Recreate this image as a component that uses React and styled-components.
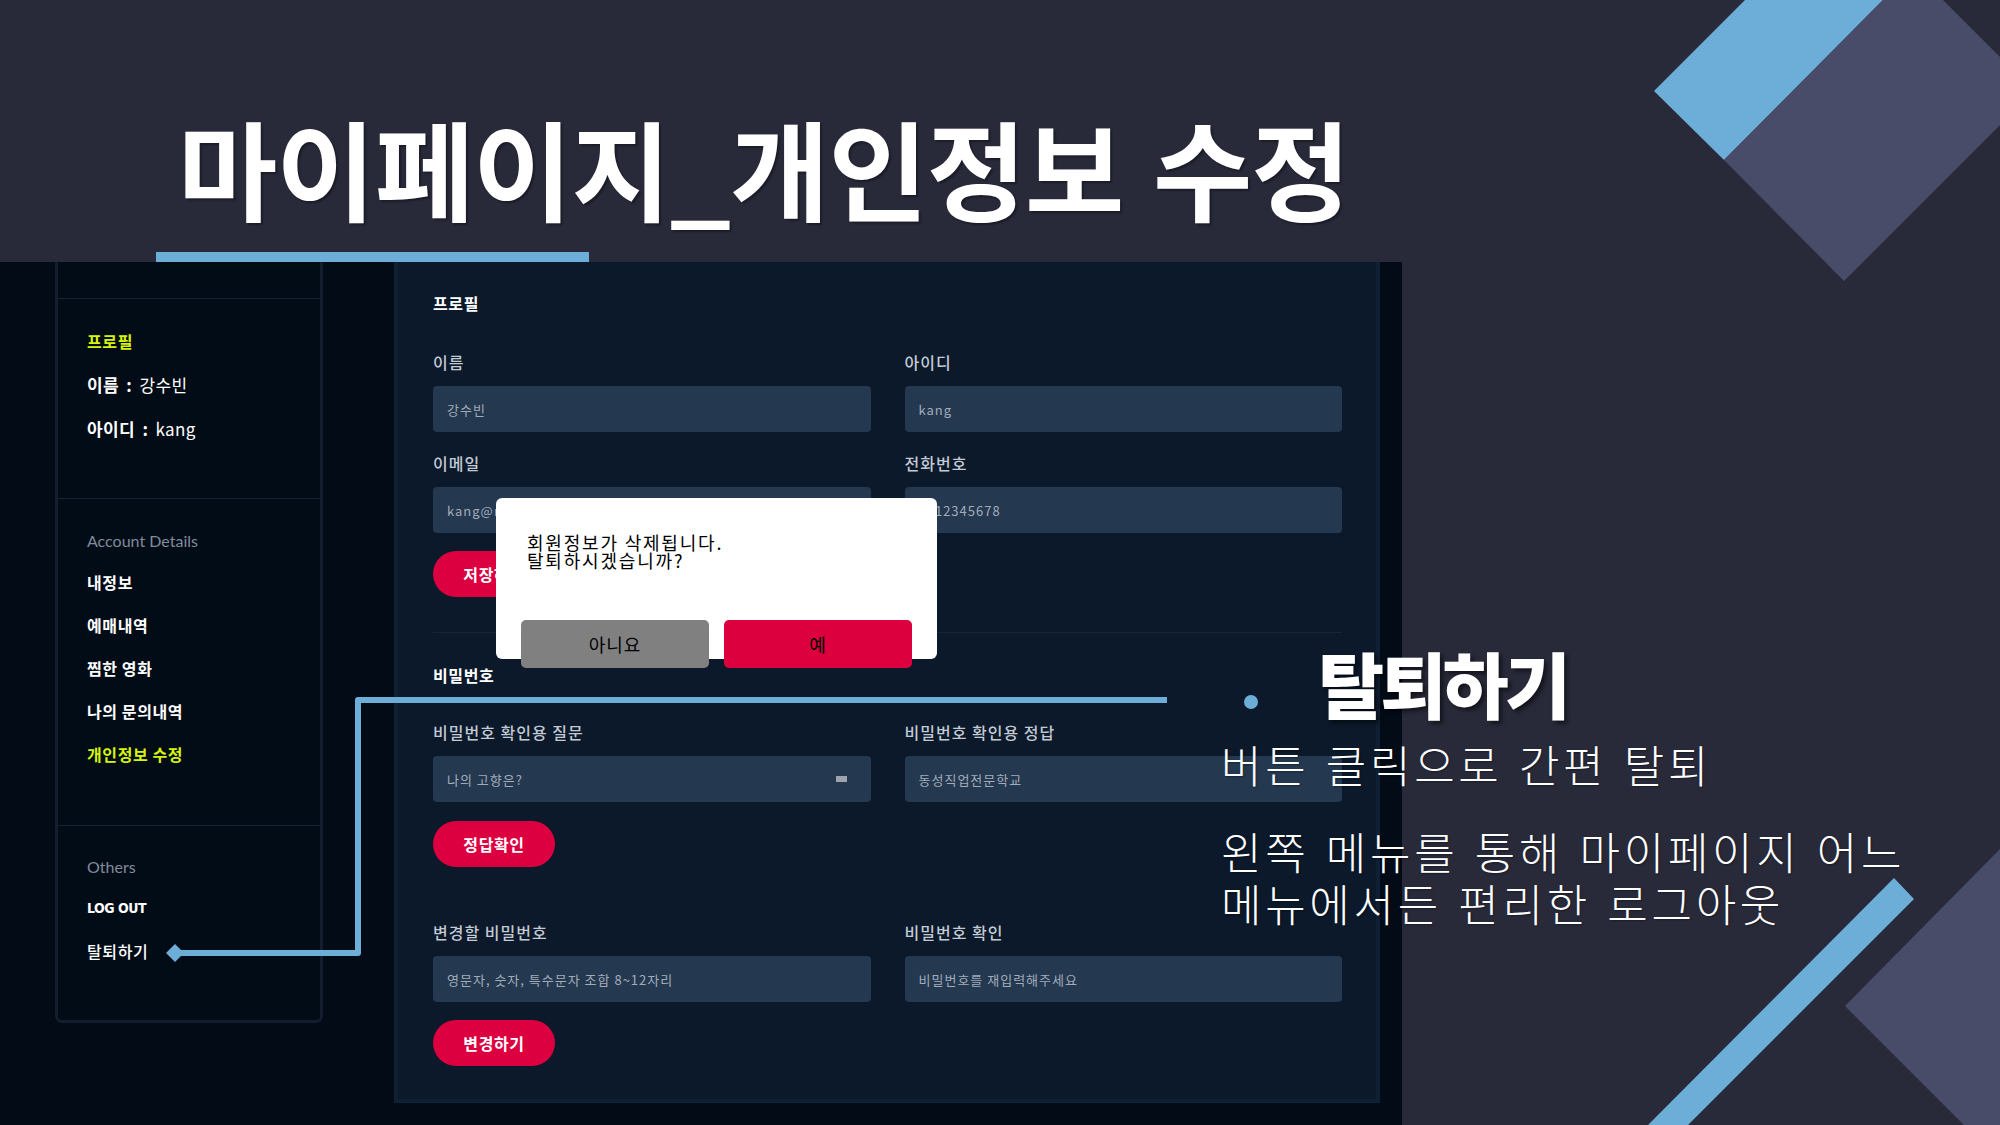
import React from 'react';
import styled, { createGlobalStyle } from 'styled-components';

const KR = `"Noto Sans CJK KR", "Noto Sans", sans-serif`;

const GlobalStyle = createGlobalStyle`
  html, body {
    margin: 0;
    padding: 0;
    background: #282a3a;
  }
  body {
    font-family: ${KR};
  }
  * {
    box-sizing: border-box;
  }
`;

const App = () => {
    return (
        <>
            <GlobalStyle />
            <Slide>
                <Decor viewBox="0 0 2000 1125">
                    <polygon points="1745,0 1883,0 1724,160 1654,91" fill="#6daed9" />
                    <polygon points="1883,0 1943,0 2000,57 2000,125 1844,281 1724,160" fill="#484c69" />
                    <polygon points="2000,849 1845,1006 1964,1125 2000,1125" fill="#484c69" />
                    <polygon points="1894,878 1914,899 1688,1125 1648,1125" fill="#6daed9" />
                </Decor>

                <Header>
                    <Title>마이페이지_개인정보 수정</Title>
                    <TitleBar />
                </Header>

                <Body>
                    <Screen>
                        <Sidebar>
                            <SideSection $h={36} $first />
                            <SideSection $h={200} $pt={20}>
                                <SideLink $accent $lh={44}>프로필</SideLink>
                                <SideInfo><b>이름 :</b> 강수빈</SideInfo>
                                <SideInfo><b>아이디 :</b> kang</SideInfo>
                            </SideSection>
                            <SideSection $h={327} $pt={22}>
                                <SideHeading>Account Details</SideHeading>
                                <SideLink>내정보</SideLink>
                                <SideLink>예매내역</SideLink>
                                <SideLink>찜한 영화</SideLink>
                                <SideLink>나의 문의내역</SideLink>
                                <SideLink $accent>개인정보 수정</SideLink>
                            </SideSection>
                            <SideSection $h={195} $pt={21}>
                                <SideHeading>Others</SideHeading>
                                <SideLink $latin>LOG OUT</SideLink>
                                <SideLink $plain>탈퇴하기</SideLink>
                            </SideSection>
                        </Sidebar>

                        <Panel>
                            <PanelTitle>프로필</PanelTitle>
                            <FieldGrid $mt={35}>
                                <Field label="이름" value="강수빈" />
                                <Field label="아이디" value="kang" />
                                <Field label="이메일" value="kang@naver.com" />
                                <Field label="전화번호" value="0112345678" />
                            </FieldGrid>
                            <PillButton $mt={18}>저장하기</PillButton>
                            <Divider />

                            <PanelTitle $mt={30}>비밀번호</PanelTitle>
                            <FieldGrid $mt={33}>
                                <Field label="비밀번호 확인용 질문" value="나의 고향은?" select />
                                <Field label="비밀번호 확인용 정답" value="동성직업전문학교" />
                            </FieldGrid>
                            <PillButton $mt={19}>정답확인</PillButton>
                            <FieldGrid $mt={53}>
                                <Field label="변경할 비밀번호" value="영문자, 숫자, 특수문자 조합 8~12자리" />
                                <Field label="비밀번호 확인" value="비밀번호를 재입력해주세요" />
                            </FieldGrid>
                            <PillButton $mt={18}>변경하기</PillButton>
                        </Panel>

                        <Modal>
                            <ModalText>
                                회원정보가 삭제됩니다.<br />
                                탈퇴하시겠습니까?
                            </ModalText>
                            <ModalActions>
                                <ModalButton>아니요</ModalButton>
                                <ModalButton $primary>예</ModalButton>
                            </ModalActions>
                        </Modal>
                    </Screen>
                </Body>

                <Connector viewBox="0 0 2000 1125">
                    <path d="M 180 953 H 358 V 700 H 1167" fill="none" stroke="#6caed8" strokeWidth="6" strokeLinejoin="round" />
                    <polygon points="166,953 175,944 184,953 175,962" fill="#6caed8" />
                </Connector>

                <Callout>
                    <CalloutHead>
                        <Dot />
                        <CalloutTitle>탈퇴하기</CalloutTitle>
                    </CalloutHead>
                    <CalloutText $mt={20}>버튼 클릭으로 간편 탈퇴</CalloutText>
                    <CalloutText $mt={35}>
                        왼쪽 메뉴를 통해 마이페이지 어느<br />
                        메뉴에서든 편리한 로그아웃
                    </CalloutText>
                </Callout>
            </Slide>
        </>
    );
}

const Field = ({ label, value, select }) => (
    <div>
        <FieldLabel>{label}</FieldLabel>
        <InputBox>
            <span>{value}</span>
            {select && <SelectMark />}
        </InputBox>
    </div>
);

const Slide = styled.div`
    position: relative;
    width: 2000px;
    height: 1125px;
    overflow: hidden;
    background: #282a3a;
    display: flex;
    flex-direction: column;
`;

const Decor = styled.svg`
    position: absolute;
    top: 0;
    left: 0;
    width: 2000px;
    height: 1125px;
    z-index: 0;
`;

const Header = styled.header`
    position: relative;
    z-index: 1;
    height: 262px;
    padding-top: 112px;
    display: flex;
    flex-direction: column;
`;

const Title = styled.h1`
    margin: 0 0 32px 178px;
    font-family: ${KR};
    font-weight: 700;
    font-size: 108px;
    line-height: 108px;
    letter-spacing: -1px;
    word-spacing: 6px;
    color: #ffffff;
    white-space: nowrap;
    text-shadow: 2px 2px 2px rgba(0, 0, 0, 0.35);
`;

const TitleBar = styled.div`
    margin-left: 156px;
    width: 433px;
    height: 10px;
    background: #6daed9;
`;

const Body = styled.div`
    position: relative;
    z-index: 1;
    display: flex;
    height: 863px;
`;

const Screen = styled.div`
    position: relative;
    width: 1402px;
    height: 863px;
    background: #020b16;
    display: flex;
    align-items: flex-start;
    padding-left: 55px;
    overflow: hidden;
`;

const Sidebar = styled.aside`
    width: 268px;
    background: #020c17;
    border: 3px solid #121e2e;
    border-top: none;
    border-radius: 0 0 7px 7px;
`;

const SideSection = styled.div`
    height: ${p => p.$h}px;
    padding: ${p => p.$pt || 0}px 0 0 29px;
    border-top: ${p => (p.$first ? 'none' : '1px solid #15233a')};
`;

const SideHeading = styled.div`
    font-family: Lato, "Noto Sans", sans-serif;
    font-size: 16px;
    line-height: 40px;
    color: #808b9c;
`;

const SideLink = styled.div`
    font-family: ${p => (p.$latin ? `"DejaVu Sans Condensed", Inter, sans-serif` : KR)};
    font-size: ${p => (p.$latin ? '14px' : '16px')};
    font-weight: ${p => (p.$plain ? 500 : 700)};
    letter-spacing: ${p => (p.$latin ? '-0.5px' : '0.6px')};
    line-height: ${p => p.$lh || 43}px;
    color: ${p => (p.$accent ? '#d6f40c' : '#ffffff')};
`;

const SideInfo = styled.div`
    font-family: ${KR};
    font-size: 17px;
    line-height: 44px;
    letter-spacing: 0.4px;
    word-spacing: 3px;
    color: #ffffff;

    b {
        font-weight: 700;
    }
`;

const Panel = styled.main`
    margin-left: 71px;
    width: 986px;
    height: 841px;
    background: #0b192b;
    border: 4px solid #0f1f34;
    border-top: none;
    padding: 29px 34px 0 35px;
`;

const PanelTitle = styled.h2`
    margin: ${p => p.$mt || 0}px 0 0;
    font-family: ${KR};
    font-size: 16px;
    font-weight: 700;
    line-height: 24px;
    letter-spacing: 0.6px;
    color: #ffffff;
`;

const FieldGrid = styled.div`
    margin-top: ${p => p.$mt}px;
    display: grid;
    grid-template-columns: 1fr 1fr;
    column-gap: 34px;
    row-gap: 19px;
`;

const FieldLabel = styled.div`
    margin-bottom: 12px;
    font-family: ${KR};
    font-size: 16px;
    font-weight: 500;
    line-height: 24px;
    letter-spacing: 1px;
    color: #c3cad4;
`;

const InputBox = styled.div`
    height: 46px;
    background: #243850;
    border-radius: 4px;
    padding: 0 24px 0 14px;
    display: flex;
    align-items: center;
    justify-content: space-between;
    font-family: ${KR};
    font-size: 13px;
    letter-spacing: 1px;
    color: #a1acba;
`;

const SelectMark = styled.i`
    width: 11px;
    height: 6px;
    background: #9ea4ac;
`;

const PillButton = styled.button`
    display: block;
    margin-top: ${p => p.$mt}px;
    width: 122px;
    height: 46px;
    border: none;
    border-radius: 23px;
    background: #dc0040;
    color: #ffffff;
    font-family: ${KR};
    font-size: 16px;
    font-weight: 700;
    letter-spacing: 0.6px;
    padding: 0;
`;

const Divider = styled.hr`
    margin: 35px 0 0;
    height: 1px;
    border: none;
    background: #14253b;
`;

const Modal = styled.div`
    position: absolute;
    left: 496px;
    top: 236px;
    width: 441px;
    height: 161px;
    background: #ffffff;
    border-radius: 6px;
    padding: 35px 25px 0;
    display: flex;
    flex-direction: column;
`;

const ModalText = styled.p`
    margin: 0 0 0 6px;
    font-family: ${KR};
    font-size: 18px;
    line-height: 18px;
    letter-spacing: 1.8px;
    color: #000000;
`;

const ModalActions = styled.div`
    display: flex;
    gap: 15px;
    margin-top: 51px;
`;

const ModalButton = styled.button`
    width: 188px;
    height: 48px;
    border: none;
    border-radius: 5px;
    background: ${p => (p.$primary ? '#dc003f' : '#808080')};
    color: #000000;
    font-family: ${KR};
    font-size: 18px;
    letter-spacing: 1px;
    padding: 0;
`;

const Connector = styled.svg`
    position: absolute;
    top: 0;
    left: 0;
    width: 2000px;
    height: 1125px;
    z-index: 2;
    pointer-events: none;
`;

const Callout = styled.div`
    position: absolute;
    left: 1221px;
    top: 646px;
    z-index: 3;
    color: #ffffff;
`;

const CalloutHead = styled.div`
    display: flex;
    align-items: flex-start;
`;

const Dot = styled.span`
    margin: 49px 0 0 23px;
    width: 14px;
    height: 14px;
    border-radius: 50%;
    background: #6daed9;
`;

const CalloutTitle = styled.h3`
    margin: 0 0 0 60px;
    font-family: ${KR};
    font-size: 72px;
    font-weight: 900;
    line-height: 72px;
    letter-spacing: -4px;
    white-space: nowrap;
    text-shadow: 3px 3px 4px rgba(0, 0, 0, 0.55);
`;

const CalloutText = styled.p`
    margin: ${p => p.$mt}px 0 0;
    font-family: ${KR};
    font-size: 44px;
    font-weight: 300;
    line-height: 52px;
    letter-spacing: 3.7px;
    word-spacing: 3px;
    white-space: nowrap;
    text-shadow: 1px 1px 2px rgba(0, 0, 0, 0.35);
`;

export default App;
